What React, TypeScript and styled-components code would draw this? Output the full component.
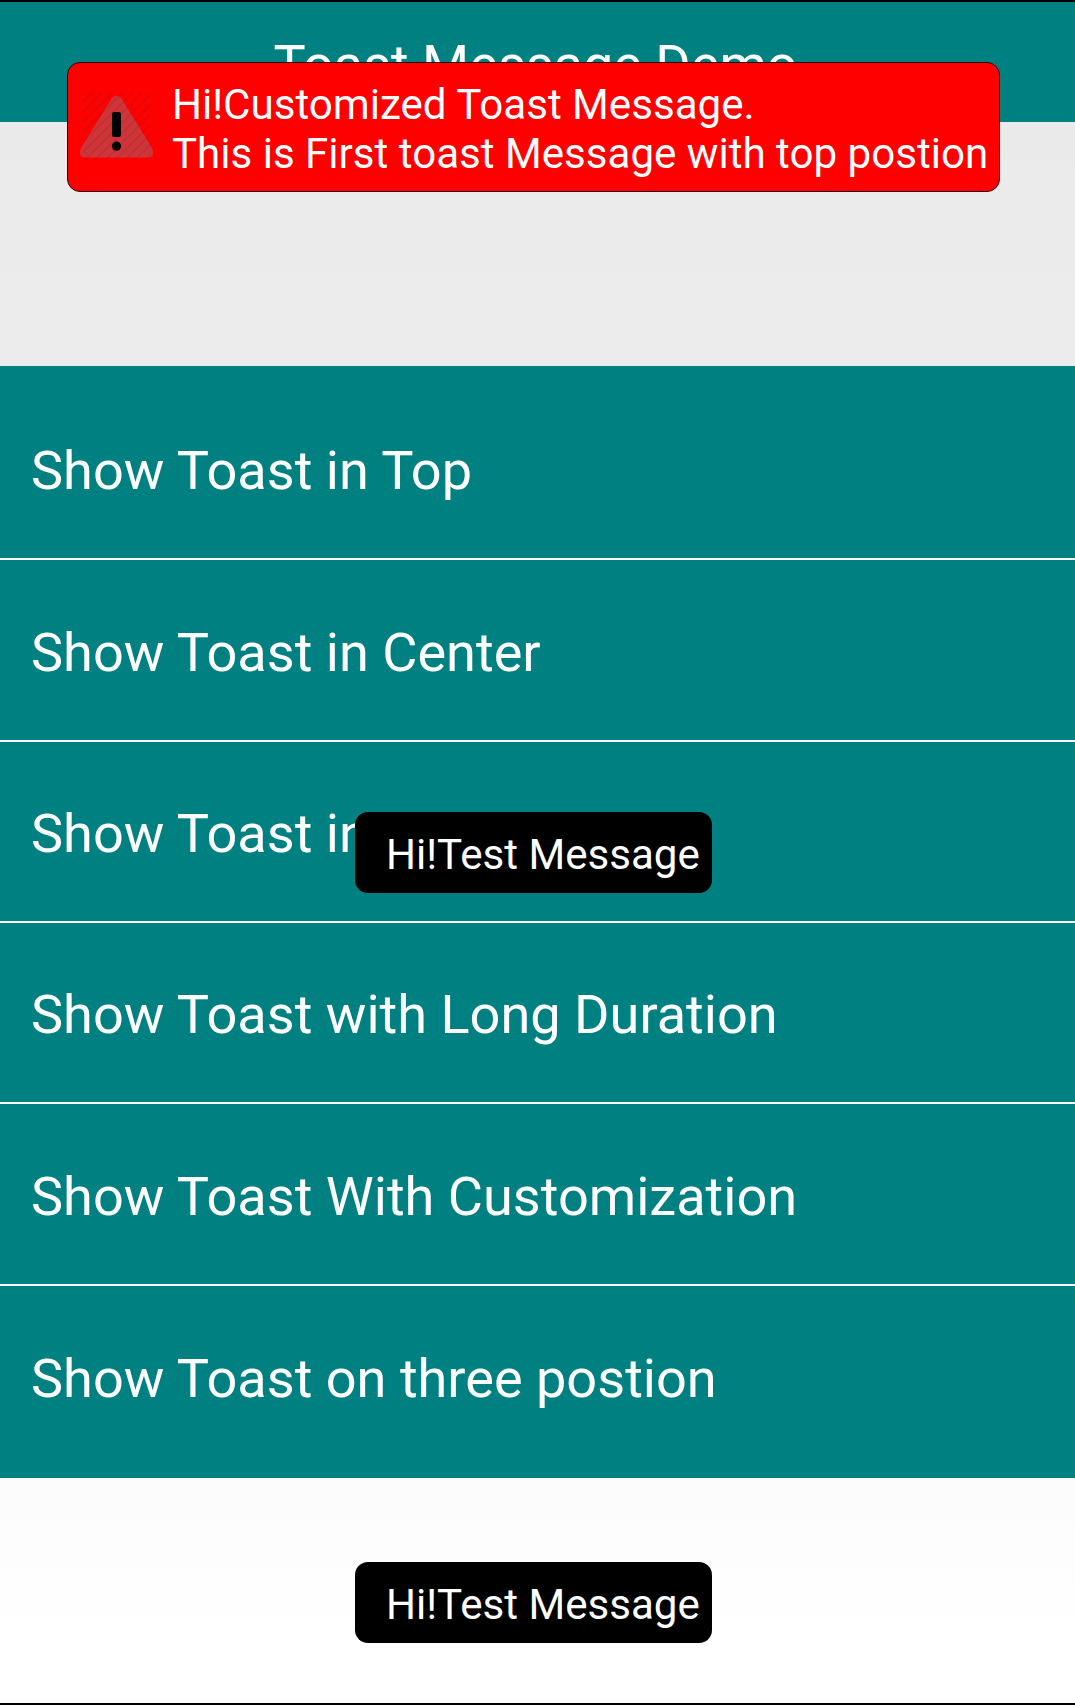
import React from 'react';
import styled, { createGlobalStyle } from 'styled-components';

const Global = createGlobalStyle`
  * { box-sizing: border-box; }
  body { margin: 0; overflow: hidden; }
`;
const Screen = styled.div`
  position: relative;
  width: 1075px;
  height: 1705px;
  display: flex;
  flex-direction: column;
  font-family: Roboto, sans-serif;
  color: #fff;
  background: linear-gradient(#e9e9e9, #ececec 366px, #fcfcfc 1478px, #fff 1650px);
  border-top: 2px solid #000;
  border-bottom: 2px solid #000;
`;
const Header = styled.header`
  height: 120px;
  padding: 5px 4px 0 0;
  background: #008080;
  display: flex;
  justify-content: center;
  align-items: center;
  font-size: 54px;
`;
const List = styled.ul`
  list-style: none;
  height: 1112px;
  margin: 244px 0 0;
  padding: 12.65px 0 0;
  background: #008080;
`;
const Row = styled.li`
  height: 181.45px;
  display: flex;
  align-items: center;
  padding: 5px 0 0 31px;
  font-size: 54.1px;
  border-bottom: 2px solid #fff;
  &:nth-child(4) { padding-top: 3.5px; }
  &:last-child { border-bottom-color: transparent; }
`;
const Toast = styled.div<{ $top: number }>`
  position: absolute;
  left: 355px;
  top: ${p => p.$top}px;
  width: 357px;
  height: 81px;
  padding-left: 31px;
  display: flex;
  align-items: center;
  background: #000;
  border-radius: 13px;
  font-size: 42.1px;
  white-space: nowrap;
`;
const Message = styled.div`
  padding-top: 4px;
`;
const Alert = styled(Toast)`
  left: 67px;
  width: 933px;
  height: 130px;
  padding-left: 12px;
  background: red;
  border: 1px solid #300;
  line-height: 49px;
  gap: 18px;
`;
const WarningSvg = styled.svg`
  flex: none;
  overflow: visible;
`;

const items = [
  'Show Toast in Top',
  'Show Toast in Center',
  'Show Toast in Bottom',
  'Show Toast with Long Duration',
  'Show Toast With Customization',
  'Show Toast on three postion',
];

const WarningIcon = () => (
  <WarningSvg width="74" height="64" viewBox="0 0 74 64">
    <defs>
      <pattern id="hatch" width="10" height="10" patternUnits="userSpaceOnUse">
        <path d="M-2 2L2-2M0 10L10 0M8 12L12 8" stroke="#502828" strokeWidth="1.8" />
      </pattern>
    </defs>
    <path d="M31.5 3.5Q36.5-2 41.5 3.5L72 53Q76 62.5 67 62.5H6Q-2.5 62.5 1 53Z" fill="#d03438" />
    <rect x="32" y="17" width="9" height="25" rx="2" fill="#000" />
    <circle cx="36.5" cy="51.2" r="4.6" fill="#000" />
    <rect x="3" y="-3" width="68" height="68" fill="url(#hatch)" opacity=".16" />
  </WarningSvg>
);

export default function App() {
  return (
    <Screen>
      <Global />
      <Header>Toast Message Demo</Header>
      <List>{items.map(t => <Row key={t}>{t}</Row>)}</List>
      <Alert $top={60}>
        <WarningIcon />
        <Message>Hi!Customized Toast Message.<br />This is First toast Message with top postion</Message>
      </Alert>
      <Toast $top={810}><Message>Hi!Test Message</Message></Toast>
      <Toast $top={1560}><Message>Hi!Test Message</Message></Toast>
    </Screen>
  );
}
